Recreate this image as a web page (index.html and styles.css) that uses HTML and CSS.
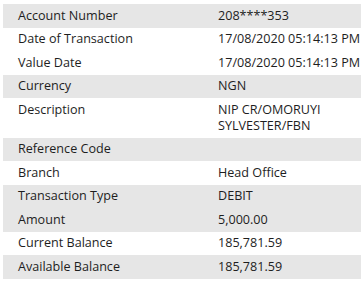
FILE: index.html
```html
<!DOCTYPE html>
<html lang="en">
<head>
    <meta charset="UTF-8">
    <meta name="viewport" content="width=device-width, initial-scale=1.0">
    <title>Transaction Details</title>
    <link rel="stylesheet" href="styles.css">
</head>
<body>
    <div class="details-container">
        <table class="details-table">
            <tr class="shaded">
                <td class="label">Account Number</td>
                <td class="value">208****353</td>
            </tr>
            <tr>
                <td class="label">Date of Transaction</td>
                <td class="value nowrap">17/08/2020 05:14:13 PM</td>
            </tr>
            <tr>
                <td class="label">Value Date</td>
                <td class="value nowrap">17/08/2020 05:14:13 PM</td>
            </tr>
            <tr class="shaded">
                <td class="label">Currency</td>
                <td class="value">NGN</td>
            </tr>
            <tr>
                <td class="label">Description</td>
                <td class="value">NIP CR/OMORUYI SYLVESTER/FBN</td>
            </tr>
            <tr class="shaded">
                <td class="label">Reference Code</td>
                <td class="value"></td>
            </tr>
            <tr>
                <td class="label">Branch</td>
                <td class="value">Head Office</td>
            </tr>
            <tr class="shaded">
                <td class="label">Transaction Type</td>
                <td class="value">DEBIT</td>
            </tr>
            <tr class="shaded">
                <td class="label">Amount</td>
                <td class="value">5,000.00</td>
            </tr>
            <tr>
                <td class="label">Current Balance</td>
                <td class="value">185,781.59</td>
            </tr>
            <tr class="shaded">
                <td class="label">Available Balance</td>
                <td class="value">185,781.59</td>
            </tr>
        </table>
    </div>
</body>
</html>
```

FILE: styles.css
```css
body {
    margin: 0;
    font-family: "Open Sans", "Noto Sans", sans-serif;
    font-size: 12.6px;
    color: #1e1e1e;
    background-color: white;
    overflow: hidden;
}

.details-container {
    padding: 4px 0 0 3px;
}

.details-table {
    border-collapse: collapse;
    table-layout: fixed;
    width: 390px;
}

.details-table td {
    padding: 3.75px 15px;
    line-height: 16px;
    vertical-align: top;
}

.shaded {
    background-color: #e6e6e6;
}

.label {
    width: 170px;
}

.value {
    width: 160px;
}

.nowrap {
    white-space: nowrap;
}
```
